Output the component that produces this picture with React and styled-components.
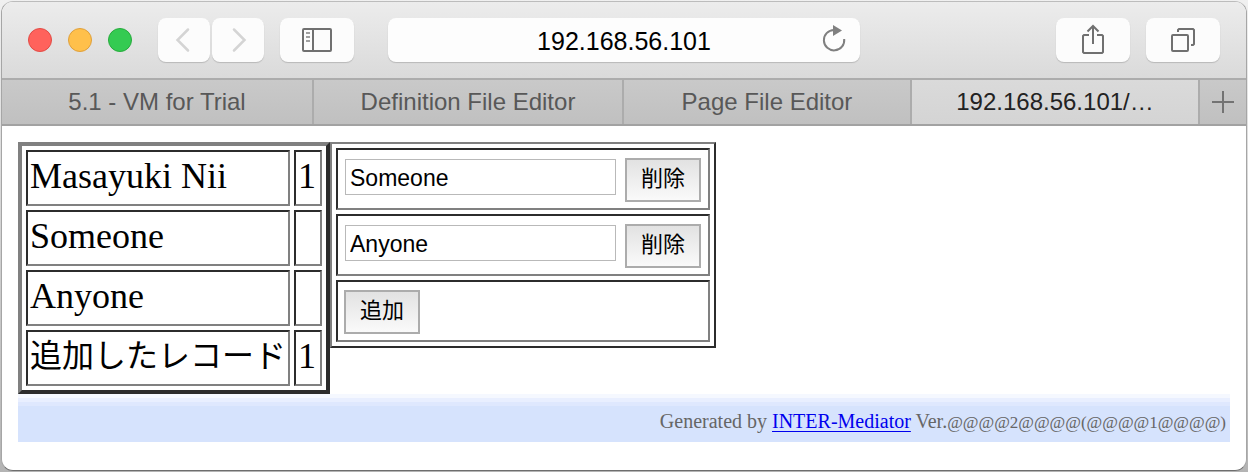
import React from "react";
import styled, { createGlobalStyle } from "styled-components";

const sans = `"Liberation Sans", Arial, "Noto Sans CJK JP", sans-serif`;
const serif = `"Liberation Serif", "Times New Roman", "Noto Sans CJK JP", serif`;

const GlobalStyle = createGlobalStyle`
  *, *::before, *::after { box-sizing: border-box; }
  body { margin: 0; background: linear-gradient(#f0f0f0, #b4b4b4); }
  button, input { font-family: ${sans}; margin: 0; }
`;

const Window = styled.div`
  margin: 1px;
  border: 1px solid #a6a6a6;
  border-top-color: #bcbcbc;
  border-bottom-color: #6e6e6e;
  border-radius: 12px;
  overflow: hidden;
  background: #fff;
`;

const Toolbar = styled.header`
  display: grid;
  grid-template-columns: 386px minmax(0, 1fr) 386px;
  align-items: center;
  height: 78px;
  background: linear-gradient(#ececec, #dadada);
  border-bottom: 2px solid #acacac;
`;

const Group = styled.div`
  display: flex;
  align-items: center;
  justify-content: ${(p) => (p.$end ? "flex-end" : "flex-start")};
  gap: 16px;
  padding: 0 26px;
`;

const Lights = styled.div`
  display: flex;
  gap: 16px;
  margin-right: 10px;
`;

const Light = styled.button`
  width: 24px;
  height: 24px;
  padding: 0;
  border: 1px solid ${(p) => p.$edge};
  border-radius: 50%;
  background: ${(p) => p.$fill};
`;

const NavPair = styled.div`
  display: flex;
  gap: 2px;
`;

const ToolButton = styled.button`
  display: flex;
  align-items: center;
  justify-content: center;
  width: ${(p) => (p.$narrow ? "52px" : "74px")};
  height: 44px;
  padding: 0;
  border: 0;
  border-radius: 8px;
  background: #fcfcfc;
  box-shadow: 0 1px 1px #b8b8b8;
  color: ${(p) => (p.$narrow ? "#d4d4d4" : "#707070")};
`;

const AddressBar = styled.div`
  display: grid;
  grid-template-columns: 52px minmax(0, 1fr) 52px;
  height: 44px;
  border-radius: 8px;
  background: #fdfdfd;
  box-shadow: 0 1px 1px #b8b8b8;
`;

const Address = styled.input`
  grid-column: 2;
  min-width: 0;
  padding: 2px 0 0;
  border: 0;
  background: none;
  font-size: 25px;
  text-align: center;
  color: #000;
`;

const Reload = styled.button`
  display: flex;
  align-items: center;
  justify-content: center;
  padding: 0;
  border: 0;
  background: none;
  color: #808080;
`;

const TabBar = styled.nav`
  display: grid;
  grid-template-columns: 312fr 310fr 288fr 288fr 46px;
  height: 46px;
  border-bottom: 2px solid #a2a2a2;
`;

const Tab = styled.button`
  min-width: 0;
  padding: 0 8px;
  border: 0;
  border-right: 2px solid #acacac;
  background: ${(p) => (p.$active ? "linear-gradient(#dadada, #d4d4d4)" : "linear-gradient(#c9c9c9, #c0c0c0)")};
  color: ${(p) => (p.$active ? "#222" : "#585858")};
  font-size: 24px;
  line-height: 44px;
  white-space: nowrap;
`;

const NewTab = styled(Tab)`
  display: flex;
  align-items: center;
  justify-content: center;
  padding: 0;
  border-right: 0;
  color: #737373;
`;

const Page = styled.main`
  padding: 16px 16px 28px;
`;

const Tables = styled.div`
  display: flex;
  align-items: flex-start;
`;

const Table = styled.table`
  border-style: solid;
  border-width: ${(p) => p.$border}px;
  border-color: #808080 #2c2c2c #2c2c2c #808080;
  border-collapse: separate;
  border-spacing: 4px;
`;

const Cell = styled.td`
  border: 2px solid;
  border-color: #2c2c2c #808080 #808080 #2c2c2c;
`;

const RecordCell = styled(Cell)`
  height: 56px;
  min-width: 28px;
  padding: 0 2px 4px;
  font-family: ${serif};
  font-size: ${(p) => (p.$cjk ? "32px" : "36px")};
  line-height: 46px;
  white-space: nowrap;
  color: #000;
`;

const EditCell = styled(Cell)`
  height: 62px;
  padding: 8px 7px 6px 6px;
`;

const EditRow = styled.div`
  display: flex;
  align-items: flex-start;
  gap: 9px;
`;

const NameInput = styled.input`
  width: 271px;
  height: 36px;
  margin: 1px 0 0 1px;
  padding: 2px 4px 0;
  border: 1px solid #b9b9b9;
  background: #fff;
  color: #000;
  font-size: 23px;
`;

const FormButton = styled.button`
  width: 76px;
  height: 44px;
  padding: 0 0 2px;
  border: 2px solid #acacac;
  background: linear-gradient(#e2e2e2, #fafafa);
  color: #000;
  font-size: 22px;
  line-height: 32px;
`;

const Credit = styled.footer`
  height: 48px;
  padding: 12px 4px 0;
  background: linear-gradient(#f5f8ff 4px, #e9efff 4px 8px, #dfe8fe 8px 12px, #d6e3fd 12px);
  color: #666;
  font-family: ${serif};
  font-size: 20px;
  line-height: 30px;
  text-align: right;
  a { color: #00e; text-decoration-thickness: 1px; text-underline-offset: 3px; }
`;

const Version = styled.span`
  font-size: 17px;
`;

const Svg = ({ size = 32, children }) => (
  <svg width={size} height={size} viewBox={`0 0 ${size} ${size}`} fill="none" stroke="currentColor" strokeWidth="2" aria-hidden="true">
    {children}
  </svg>
);

const lights = [
  { name: "Close", fill: "#ff625c", edge: "#e24b45" },
  { name: "Minimize", fill: "#ffc04b", edge: "#dfa03c" },
  { name: "Zoom", fill: "#34cb52", edge: "#27ab3c" },
];

const records = [
  { name: "Masayuki Nii", flag: "1" },
  { name: "Someone", flag: "" },
  { name: "Anyone", flag: "" },
  { name: "追加したレコード", flag: "1", cjk: true },
];

export default function App() {
  return (
    <>
      <GlobalStyle />
      <Window>
        <Toolbar>
          <Group>
            <Lights>
              {lights.map((l) => (
                <Light key={l.name} aria-label={l.name} $fill={l.fill} $edge={l.edge} />
              ))}
            </Lights>
            <NavPair>
              <ToolButton $narrow aria-label="Back">
                <Svg><path d="M20 5.500L9.500 16L20 26.500" strokeWidth="2.500" strokeLinecap="round" /></Svg>
              </ToolButton>
              <ToolButton $narrow aria-label="Forward">
                <Svg><path d="M12 5.500L22.500 16L12 26.500" strokeWidth="2.500" strokeLinecap="round" /></Svg>
              </ToolButton>
            </NavPair>
            <ToolButton aria-label="Sidebar">
              <Svg>
                <rect x="2" y="5" width="28" height="22" rx="1" />
                <path d="M12 5V27" />
                <path d="M5 9H9M5 13H9M5 17H9" stroke="#a0a0a0" />
              </Svg>
            </ToolButton>
          </Group>
          <AddressBar>
            <Address aria-label="Address" defaultValue="192.168.56.101" />
            <Reload aria-label="Reload">
              <Svg>
                <path d="M26.200 15A10.200 10.200 0 1 1 16 6" />
                <path d="M15 1L24 6.500L15 12Z" fill="currentColor" stroke="none" />
              </Svg>
            </Reload>
          </AddressBar>
          <Group $end>
            <ToolButton aria-label="Share">
              <Svg>
                <path d="M12 11H7L6 12V28L7 29H25L26 28V12L25 11H20M16 20V2M10.500 7.500L16 2L21.500 7.500" />
              </Svg>
            </ToolButton>
            <ToolButton aria-label="Show all tabs">
              <Svg>
                <rect x="5" y="11" width="16" height="16" rx="1" />
                <path d="M11 8V6L12 5H26L27 6V20L26 21H24" />
              </Svg>
            </ToolButton>
          </Group>
        </Toolbar>
        <TabBar>
          <Tab>5.1 - VM for Trial</Tab>
          <Tab>Definition File Editor</Tab>
          <Tab>Page File Editor</Tab>
          <Tab $active>192.168.56.101/…</Tab>
          <NewTab aria-label="New tab">
            <Svg size={24}><path d="M1 12H23M12 1V23" /></Svg>
          </NewTab>
        </TabBar>
        <Page>
          <Tables>
            <Table $border={4}>
              <tbody>
                {records.map((r) => (
                  <tr key={r.name}>
                    <RecordCell $cjk={r.cjk}>{r.name}</RecordCell>
                    <RecordCell>{r.flag}</RecordCell>
                  </tr>
                ))}
              </tbody>
            </Table>
            <Table $border={2}>
              <tbody>
                {["Someone", "Anyone"].map((name) => (
                  <tr key={name}>
                    <EditCell>
                      <EditRow>
                        <NameInput aria-label="Name" defaultValue={name} />
                        <FormButton>削除</FormButton>
                      </EditRow>
                    </EditCell>
                  </tr>
                ))}
                <tr>
                  <EditCell>
                    <EditRow>
                      <FormButton>追加</FormButton>
                    </EditRow>
                  </EditCell>
                </tr>
              </tbody>
            </Table>
          </Tables>
          <Credit>
            Generated by <a href="#inter-mediator">INTER-Mediator</a> Ver.<Version>@@@@2@@@@(@@@@1@@@@)</Version>
          </Credit>
        </Page>
      </Window>
    </>
  );
}
